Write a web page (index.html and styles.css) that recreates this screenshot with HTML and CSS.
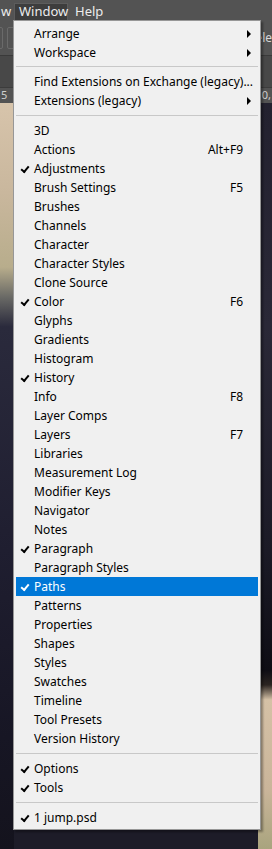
FILE: index.html
```html
<!DOCTYPE html>
<html lang="en">
<head>
  <meta charset="UTF-8">
  <meta name="viewport" content="width=device-width, initial-scale=1.0">
  <title>Window menu</title>
  <link rel="stylesheet" href="styles.css">
</head>
<body>
  <div class="app">
    <div class="menubar">
      <span class="mb_item mb_cut">w</span>
      <span class="mb_item mb_on">Window</span>
      <span class="mb_item mb_help">Help</span>
    </div>
    <div class="options">
      <div class="opt_box"></div>
      <div class="opt_box"></div>
      <span class="opt_text">ele</span>
    </div>
    <div class="tabs"></div>
    <div class="ruler"><span class="r_left">5</span><span class="r_right">0,</span></div>
    <div class="canvas">
      <div class="cv_left"></div>
      <div class="cv_right"></div>
    </div>
  </div>

  <!-- Window 드롭다운 -->
  <div class="dropdown">
    <ul class="group">
      <li class="item sub">Arrange</li>
      <li class="item sub">Workspace</li>
    </ul>
    <ul class="group tight">
      <li class="item">Find Extensions on Exchange (legacy)...</li>
      <li class="item sub">Extensions (legacy)</li>
    </ul>
    <ul class="group">
      <li class="item">3D</li>
      <li class="item">Actions<span class="key">Alt+F9</span></li>
      <li class="item checked">Adjustments</li>
      <li class="item">Brush Settings<span class="key">F5</span></li>
      <li class="item">Brushes</li>
      <li class="item">Channels</li>
      <li class="item">Character</li>
      <li class="item">Character Styles</li>
      <li class="item">Clone Source</li>
      <li class="item checked">Color<span class="key">F6</span></li>
      <li class="item">Glyphs</li>
      <li class="item">Gradients</li>
      <li class="item">Histogram</li>
      <li class="item checked">History</li>
      <li class="item">Info<span class="key">F8</span></li>
      <li class="item">Layer Comps</li>
      <li class="item">Layers<span class="key">F7</span></li>
      <li class="item">Libraries</li>
      <li class="item">Measurement Log</li>
      <li class="item">Modifier Keys</li>
      <li class="item">Navigator</li>
      <li class="item">Notes</li>
      <li class="item checked">Paragraph</li>
      <li class="item">Paragraph Styles</li>
      <li class="item checked active">Paths</li>
      <li class="item">Patterns</li>
      <li class="item">Properties</li>
      <li class="item">Shapes</li>
      <li class="item">Styles</li>
      <li class="item">Swatches</li>
      <li class="item">Timeline</li>
      <li class="item">Tool Presets</li>
      <li class="item">Version History</li>
    </ul>
    <ul class="group">
      <li class="item checked">Options</li>
      <li class="item checked">Tools</li>
    </ul>
    <ul class="group">
      <li class="item checked">1 jump.psd</li>
    </ul>
  </div>
</body>
</html>
```

FILE: styles.css
```css
* {margin: 0;padding: 0;list-style: none;box-sizing: border-box;}
body {width: 272px;height: 849px;overflow: hidden;font-family: "Noto Sans", "Open Sans", sans-serif;font-size: 12px;background-color: #1d1c28;}
.app {display: flex;flex-direction: column;height: 849px;}

/* 상단 메뉴바 */
.menubar {display: flex;align-items: flex-end;height: 20px;background-color: #535353;color: #ececec;font-size: 13px;}
.mb_item {height: 17px;line-height: 15px;border: 1px solid transparent;border-bottom: 0;}
.mb_cut {width: 14px;padding-left: 0;}
.mb_on {width: 54px;padding-left: 4px;background-color: #3d3d3d;border-color: #5c5c5c;}
.mb_help {padding-left: 6px;}

.options {display: flex;align-items: center;gap: 4px;height: 36px;background-color: #535353;border-bottom: 1px solid #3a3a3a;}
.opt_box {width: 8px;height: 22px;border: 1px solid #6a6a6a;border-radius: 2px;}
.opt_box:first-child {margin-left: -5px;}
.opt_text {margin-left: auto;margin-right: 0;color: #d8d8d8;font-size: 12px;}
.tabs {height: 31px;background-color: #484848;}
.ruler {display: flex;justify-content: space-between;height: 16px;background-color: #535353;border-top: 1px solid #3c3c3c;color: #cfcfcf;font-size: 11px;line-height: 14px;}
.r_left {padding-left: 1px;}
.r_right {margin-right: 1px;}

/* 사진 영역 - 메뉴 양옆으로만 보임 */
.canvas {flex: 1;display: flex;justify-content: space-between;}
.cv_left {width: 14px;background: linear-gradient(180deg, #d7c4ab 0%, #c9b79d 12%, #b8ad8c 22%, #6a6a66 26%, #2a2a3c 30%, #1f1e30 60%, #171624 85%, #14131d 100%);}
.cv_right {width: 14px;background: linear-gradient(180deg, #23212f 0%, #2a2837 30%, #1b1a26 60%, #0e0d14 76%, #2b2421 78%, #d5c1a6 80%, #cab59a 92%, #a9a47e 100%);}

/* Window 드롭다운 */
.dropdown {
  position: absolute;
  left: 13px;
  top: 20px;
  width: 248px;
  padding: 3px 2px 2px;
  background-color: #f0f0f0;
  border: 1px solid #979797;
  box-shadow: 2px 2px 2px rgba(0, 0, 0, 0.35);
  color: #000;
}
.group + .group {border-top: 1px solid #c8c8c8;margin-top: 5px;padding-top: 5px;}
.group + .tight {margin-top: 4px;}
.item {position: relative;height: 19px;line-height: 19px;padding: 0 15px 0 18px;white-space: nowrap;}
.item.active {background-color: #0078d7;color: #fff;}
.key {position: absolute;right: 15px;top: 0;}
.checked::before {
  content: "";
  position: absolute;
  left: 5px;
  top: 7px;
  width: 6px;
  height: 3px;
  border-left: 2px solid currentColor;
  border-bottom: 2px solid currentColor;
  transform: rotate(-50deg);
}
.sub::after {
  content: "";
  position: absolute;
  right: 7px;
  top: 6px;
  border-left: 4px solid #000;
  border-top: 4px solid transparent;
  border-bottom: 4px solid transparent;
}
```
